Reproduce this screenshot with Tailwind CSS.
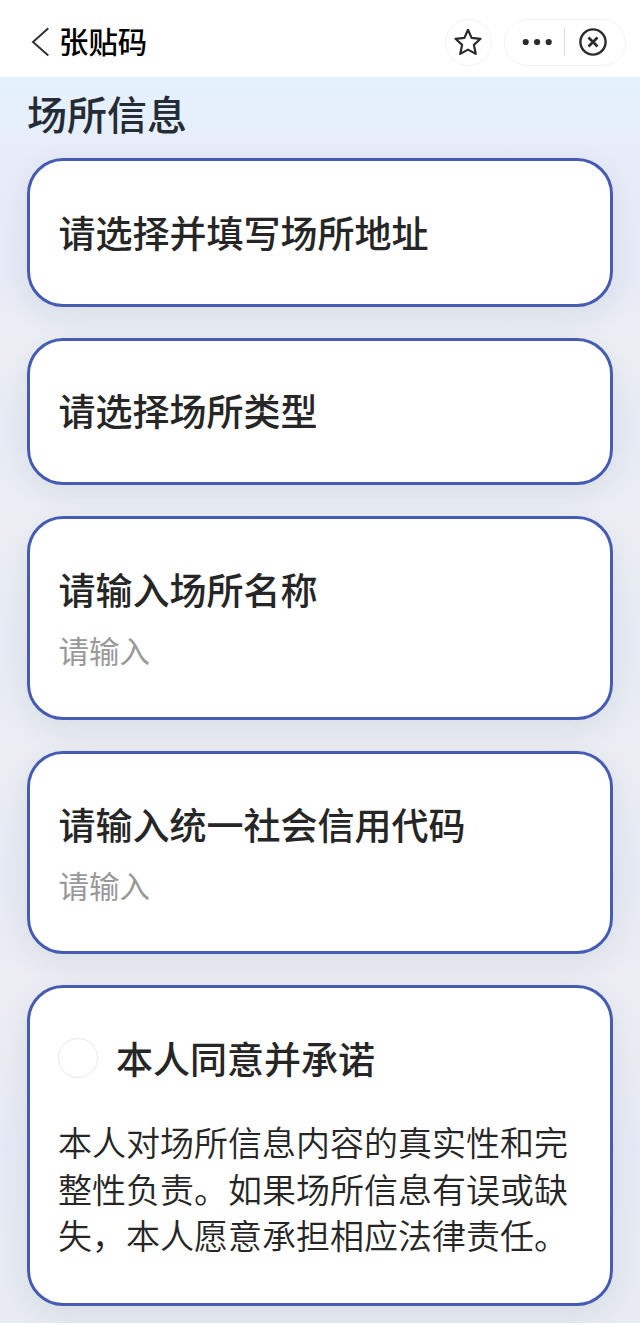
<!DOCTYPE html>
<html lang="zh-CN">
<head>
<meta charset="utf-8">
<meta name="viewport" content="width=device-width, initial-scale=1">
<title>张贴码</title>
<script src="https://cdn.jsdelivr.net/npm/@tailwindcss/browser@4"></script>
</head>
<body class="h-[1325px] w-[640px] overflow-hidden bg-white font-['Noto_Sans_CJK_SC',sans-serif] text-[#262626]">
<header class="flex h-[77px] items-center bg-white pt-[7px] pr-[14px] pl-[31px]">
  <svg class="h-[32px] w-[19px]" viewBox="0 0 19 32" fill="none" stroke="#333" stroke-width="2"><path d="M17.3 2.2 2 16l15.3 13.6"/></svg>
  <h1 class="mb-[5px] ml-[9px] text-[29.4px] leading-[40px] font-medium text-black">张贴码</h1>
  <button class="ml-auto flex size-[47px] items-center justify-center rounded-full border border-[#f3f3f3]">
    <svg class="mr-px size-[30px]" viewBox="0 0 30 30" fill="none" stroke="#2b2b2b" stroke-width="2.2" stroke-linejoin="round"><path d="m15 2.8 3.6 8.1 8.9.9-6.6 6.1 1.9 9-7.8-4.3-7.8 4.3 1.9-9-6.6-6.1 8.9-.9z"/></svg>
  </button>
  <div class="ml-[12px] flex h-[47px] w-[122px] items-center rounded-full border border-[#f3f3f3]">
    <svg class="ml-[16px] h-[8px] w-[32px]" viewBox="0 0 32 8" fill="#2b2b2b"><circle cx="4.7" cy="4" r="3.1"/><circle cx="16.1" cy="4" r="3.1"/><circle cx="27.7" cy="4" r="3.1"/></svg>
    <span class="ml-[11px] h-[28px] w-px bg-[#dcdcdc]"></span>
    <svg class="ml-[13px] size-[30px]" viewBox="0 0 30 30" fill="none" stroke="#2b2b2b" stroke-width="2.4"><circle cx="15" cy="15" r="12.6"/><path d="m10.5 10.5 9 9m0-9-9 9" stroke-width="2.7"/></svg>
  </div>
</header>
<main class="h-[1246px] overflow-hidden bg-[linear-gradient(180deg,#e5f1fc_0px,#e5f0fb_48px,#e8ebf8_72px,#e7eaf6_200px,#eceef2_275px,#e6eaf5_350px,#eceef3_450px,#e6eaf4_560px,#ebedf2_680px,#e6e9f4_800px,#ecedf2_910px,#e6e9f5_1070px,#e8ebf1_1246px)] px-[27px]">
  <h2 class="pt-[6px] text-[40px] leading-[60px] font-medium text-[#262b38]">场所信息</h2>
  <div class="mt-[15px] flex flex-col gap-[31px]">
    <section class="h-[149px] rounded-[36px] border-3 border-[#455cb2] bg-white px-[28.5px] pt-[44px] shadow-[0_8px_26px_rgba(100,120,135,0.12)]">
      <h3 class="text-[37px] leading-[54px] font-medium">请选择并填写场所地址</h3>
    </section>
    <section class="h-[147px] rounded-[36px] border-3 border-[#455cb2] bg-white px-[28.5px] pt-[42px] shadow-[0_8px_26px_rgba(100,120,135,0.12)]">
      <h3 class="text-[37px] leading-[54px] font-medium">请选择场所类型</h3>
    </section>
    <section class="h-[203.5px] rounded-[36px] border-3 border-[#455cb2] bg-white px-[28.5px] pt-[43px] shadow-[0_8px_26px_rgba(100,120,135,0.12)]">
      <h3 class="text-[37px] leading-[54px] font-medium">请输入场所名称</h3>
      <p class="mt-[11px] text-[30.5px] leading-[46px] text-[#999]">请输入</p>
    </section>
    <section class="h-[203.5px] rounded-[36px] border-3 border-[#455cb2] bg-white px-[28.5px] pt-[43px] shadow-[0_8px_26px_rgba(100,120,135,0.12)]">
      <h3 class="text-[37px] leading-[54px] font-medium">请输入统一社会信用代码</h3>
      <p class="mt-[11px] text-[30.5px] leading-[46px] text-[#999]">请输入</p>
    </section>
    <section class="h-[321px] rounded-[36px] border-3 border-[#455cb2] bg-white pt-[43px] pr-[20px] pl-[28px] shadow-[0_8px_26px_rgba(100,120,135,0.12)]">
      <div class="flex items-center">
        <span class="size-[40px] rounded-full border-[1.5px] border-[#e9e9e9]"></span>
        <h3 class="ml-[18px] text-[37px] leading-[54px] font-medium">本人同意并承诺</h3>
      </div>
      <p class="mt-[34px] text-[34px] leading-[46.5px] font-[350] whitespace-nowrap">本人对场所信息内容的真实性和完<br>整性负责。如果场所信息有误或缺<br>失，本人愿意承担相应法律责任。</p>
    </section>
  </div>
</main>
</body>
</html>
